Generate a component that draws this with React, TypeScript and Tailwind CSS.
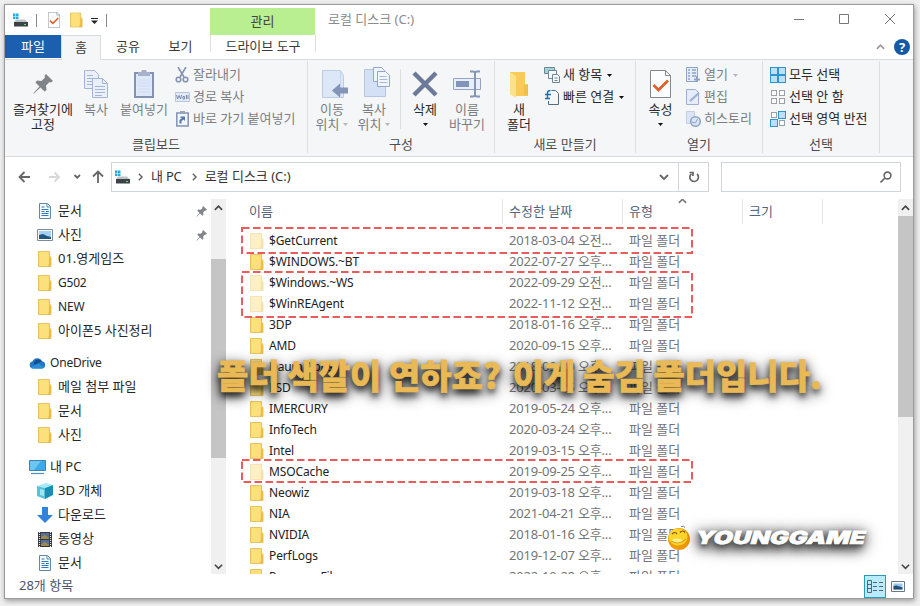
import type { ReactNode } from "react";
import clsx from "clsx";

type IconName = "doc" | "picture" | "folder" | "cloud" | "pc" | "cube" | "download" | "video";

interface NavItem {
  label: string;
  icon: IconName;
  root?: boolean;
  pinned?: boolean;
  latin?: boolean; // latin-only labels are set slightly smaller than hangul
}

interface FileRow {
  name: string;
  date: string;
  hidden?: boolean;
}

const NAV: NavItem[] = [
  { label: "문서", icon: "doc", pinned: true },
  { label: "사진", icon: "picture", pinned: true },
  { label: "01.영게임즈", icon: "folder" },
  { label: "G502", icon: "folder", latin: true },
  { label: "NEW", icon: "folder", latin: true },
  { label: "아이폰5 사진정리", icon: "folder" },
  { label: "OneDrive", icon: "cloud", root: true, latin: true },
  { label: "메일 첨부 파일", icon: "folder" },
  { label: "문서", icon: "folder" },
  { label: "사진", icon: "folder" },
  { label: "내 PC", icon: "pc", root: true },
  { label: "3D 개체", icon: "cube" },
  { label: "다운로드", icon: "download" },
  { label: "동영상", icon: "video" },
  { label: "문서", icon: "doc" },
];

const FILES: FileRow[] = [
  { name: "$GetCurrent", date: "2018-03-04 오전...", hidden: true },
  { name: "$WINDOWS.~BT", date: "2022-07-27 오후..." },
  { name: "$Windows.~WS", date: "2022-09-29 오전...", hidden: true },
  { name: "$WinREAgent", date: "2022-11-12 오전...", hidden: true },
  { name: "3DP", date: "2018-01-16 오후..." },
  { name: "AMD", date: "2020-09-15 오후..." },
  { name: "Daum Apps", date: "2018-09-20 오후..." },
  { name: "ESD", date: "2020-03-25 오후..." },
  { name: "IMERCURY", date: "2019-05-24 오후..." },
  { name: "InfoTech", date: "2020-03-24 오후..." },
  { name: "Intel", date: "2019-03-15 오후..." },
  { name: "MSOCache", date: "2019-09-25 오후...", hidden: true },
  { name: "Neowiz", date: "2019-03-18 오후..." },
  { name: "NIA", date: "2021-04-21 오후..." },
  { name: "NVIDIA", date: "2018-01-16 오후..." },
  { name: "PerfLogs", date: "2019-12-07 오후..." },
  { name: "Program Files", date: "2022-10-28 오후..." },
];

function FolderIcon({ faded, className = "w-[14px] h-4" }: { faded?: boolean; className?: string }) {
  return (
    <svg viewBox="0 0 14 16" className={clsx("shrink-0", className, faded && "opacity-45")}>
      <path d="M.5.5h11v4l1.500 2v9H.5z" fill="#fbdc72" stroke="#dfb648" strokeWidth=".8" />
      <path d="M2 1h8v14H2z" fill="#fde07c" />
      <path d="M11 5v7l-1 3.500h3V8z" fill="#e9bd48" />
    </svg>
  );
}

function PinIcon({ className }: { className?: string }) {
  return (
    <svg viewBox="0 0 20 20" className={className} fill="#80858b">
      <path d="M13 0l7 7-2 1.500-1.500-.5-3.500 3.500.5 4.500-2 1.500-4-4L1.500 19 0 20l1-1.500 5.500-6-4-4L4 6.500l4.500.5L12 3.500 11.500 2z" />
    </svg>
  );
}

function DriveIcon() {
  return (
    <svg viewBox="0 0 16 14" className="w-4 h-[14px] shrink-0">
      <path d="M1 .5h2.500V3H1zM4 .5h2.500V3H4zM1 3.500h2.500V6H1zM4 3.500h2.500V6H4z" fill="#2aa9d6" />
      <path d="M4 6.500h9l3 3H2z" fill="#bcc3c8" />
      <path d="M2 9h14v4.500H2z" fill="#3c4246" />
      <path d="M12 11h2v1h-2z" fill="#5ee26a" />
    </svg>
  );
}

function NavIcon({ name }: { name: IconName }) {
  switch (name) {
    case "folder":
      return <FolderIcon />;
    case "doc":
      return (
        <svg viewBox="0 0 16 16" className="w-4 h-4">
          <path d="M2.5.5h8l3 3v12h-11z" fill="#f5faff" stroke="#5b8ab0" />
          <path d="M4.5 4h3M4.5 6.5h7M4.5 8.5h3M9 8.5h3M4.5 10.5h7M4.5 12.5h7" stroke="#2f7cc0" />
          <path d="M10 .5v3.500h3.500" fill="none" stroke="#5b8ab0" />
        </svg>
      );
    case "picture":
      return (
        <svg viewBox="0 0 16 12" className="w-4 h-3">
          <path d="M.5.5h15v11H.5z" fill="#fff" stroke="#7d8b99" />
          <path d="M2 2h12v8H2z" fill="#a5d0f2" />
          <path d="M2 6l4-1 4 2 4 1v2H2z" fill="#24557f" />
        </svg>
      );
    case "cloud":
      return (
        <svg viewBox="0 0 17 12" className="w-[17px] h-3">
          <path d="M4 11.500a3.500 3.500 0 0 1-.6-6.900A5.200 5.200 0 0 1 13 4.200a3.700 3.700 0 0 1 .2 7.300z" fill="#1f78c8" />
          <path d="M4.500 5.500A5.200 5.200 0 0 1 13 4.200L6 8z" fill="#125091" />
          <path d="M2 10.600L9 6.500l6.300 4c-.6.700-1.300 1-2.100 1H4c-.8 0-1.500-.4-2-.9z" fill="#2b8fd8" />
        </svg>
      );
    case "pc":
      return (
        <svg viewBox="0 0 17 16" className="w-[17px] h-4">
          <path d="M.5 1.500h16v10H.5z" fill="#3fa9e8" stroke="#3d83af" />
          <path d="M1 2h11L5 11H1z" fill="#6cc6f4" />
          <path d="M2 14.500h13" stroke="#4c91bd" strokeWidth="1.200" />
        </svg>
      );
    case "cube":
      return (
        <svg viewBox="0 0 16 16" className="w-4 h-4">
          <path d="M0 3l9-3 7 2-8 3z" fill="#a9e9f5" />
          <path d="M0 3l8 2v11l-8-3z" fill="#53c2dc" />
          <path d="M8 5l8-3v10l-8 4z" fill="#1a8eb2" />
          <path d="M3 6l4 1v6l-4-1z" fill="#a5e2ef" />
        </svg>
      );
    case "download":
      return (
        <svg viewBox="0 0 16 16" className="w-4 h-4">
          <path d="M5 0h6v8h5l-8 8-8-8h5z" fill="#2f83dc" />
        </svg>
      );
    case "video":
      return (
        <svg viewBox="0 0 14 15" className="w-[14px] h-[15px]">
          <path d="M0 0h14v15H0z" fill="#33363b" />
          <path d="M3 1h8v6H3zM3 8h8v6H3z" fill="#566f96" />
          <path d="M3 5l4-2 4 3v1H3zM3 12l4-2 4 3v1H3z" fill="#9c8a4f" />
          <path d="M1.500 0v15M12.500 0v15" stroke="#e8e8e8" strokeWidth="1.200" strokeDasharray="1 1" />
        </svg>
      );
  }
}

function Caret({ faded }: { faded?: boolean }) {
  return (
    <svg viewBox="0 0 5 3" className={clsx("w-[5px] h-[3px] shrink-0", faded ? "fill-[#b5b8bb]" : "fill-[#111]")}>
      <path d="M0 0h5L2.500 3z" />
    </svg>
  );
}

function Chevron({ dir, className }: { dir: "up" | "down" | "right"; className?: string }) {
  const d = { up: "M1 6.500l4-4 4 4", down: "M1 3l4 4 4-4", right: "M3.500 1l4 4-4 4" }[dir];
  return (
    <svg viewBox="0 0 10 10" className={clsx("shrink-0", className)} fill="none" stroke="currentColor" strokeWidth="1.800">
      <path d={d} />
    </svg>
  );
}

function BigButton({ icon, lines, className, muted, caret }: { icon: ReactNode; lines: string[]; className: string; muted?: boolean; caret?: "line" | "inline" }) {
  return (
    <div className={clsx("flex flex-col items-center shrink-0 pt-2 leading-[15px] whitespace-nowrap", muted ? "text-[#7b7e82]" : "text-[#2b2b2b]", className)}>
      <div className="h-[30px] flex items-center justify-center">{icon}</div>
      <div className="mt-[3px] text-center">
        {lines.map((line, i) => (
          <div key={line} className="flex items-center justify-center gap-1">
            {line}
            {caret === "inline" && i === lines.length - 1 && <Caret faded />}
          </div>
        ))}
      </div>
      {caret === "line" && <div className="h-[15px] flex items-center"><Caret /></div>}
    </div>
  );
}

function SmallButton({ icon, label, muted, caret }: { icon: ReactNode; label: string; muted?: boolean; caret?: boolean }) {
  return (
    <div className={clsx("flex items-center h-[22px] whitespace-nowrap", muted ? "text-[#7b7e82]" : "text-[#2b2b2b]")}>
      <span className="w-4 mr-[3px] flex justify-center">{icon}</span>
      {label}
      {caret && <span className="ml-[5px]"><Caret faded={muted} /></span>}
    </div>
  );
}

function RibbonGroup({ label, className, children }: { label: string; className: string; children?: ReactNode }) {
  return (
    <div className={clsx("flex flex-col shrink-0 border-r border-[#dcdfe2] h-[92px]", className)}>
      <div className="flex h-[76px]">{children}</div>
      <div className="text-center leading-[18px] text-[#4c4c4c]">{label}</div>
    </div>
  );
}

function PagesIcon() {
  return (
    <svg viewBox="0 0 24 28" className="w-6 h-7" fill="#eaf0fa" stroke="#a5b5d6">
      <path d="M.5.5h10l4 4v14H.5z" />
      <path d="M3 5.500h6M3 8.500h9M3 11.500h9M3 14.500h9" />
      <path d="M8.500 8.500h10l5 5v14h-15z" />
      <path d="M18.500 8.500v5h5M11 16.500h10M11 19.500h10M11 22.500h10M11 25.500h7" fill="none" />
    </svg>
  );
}

function PasteIcon() {
  return (
    <svg viewBox="0 0 20 30" className="w-5 h-[30px]">
      <path d="M1 4h18v24H1z" fill="#dfe8f9" stroke="#8292b4" strokeWidth="2" />
      <path d="M4 3h3l1-2h4l1 2h3v4H4z" fill="#a7b2c8" />
      <path d="M4 11h12M4 14h12M4 17h12M4 20h12M4 23h12" stroke="#d0dcf3" />
    </svg>
  );
}

function MoveIcon() {
  return (
    <svg viewBox="0 0 26 28" className="w-[26px] h-7">
      <path d="M.5.5h18l3 5v22H.5z" fill="#dce7f8" stroke="#bccbe6" />
      <path d="M18.500 1v26" stroke="#c6d5ee" />
      <path d="M10 20.500l8-7v4h9v6h-9v4z" fill="#8294b7" />
    </svg>
  );
}

function CopyToIcon() {
  return (
    <svg viewBox="0 0 26 30" className="w-[26px] h-[30px]">
      <path d="M.5 2.500h18l3 5v22H.5z" fill="#d3e0f5" stroke="#b5c6e3" />
      <path d="M9.500.5h8l3 3v11h-11z" fill="#f1f5fc" stroke="#93a5ca" />
      <path d="M13.500 4.500h8l4 4v11h-12z" fill="#f1f5fc" stroke="#93a5ca" />
      <path d="M15.500 9.500h7M15.500 12.500h8M15.500 15.500h8" stroke="#a9b9d8" />
    </svg>
  );
}

function RenameIcon() {
  return (
    <svg viewBox="0 0 28 28" className="w-7 h-7">
      <path d="M.5 8.500h27v11H.5z" fill="#e8eefa" stroke="#93a5ca" />
      <path d="M3 11h13v6H3z" fill="#8294b7" />
      <path d="M17 1.500h3q2 0 2 2v21q0 2-2 2h-3M27 1.500h-3q-2 0-2 2M27 26.500h-3q-2 0-2-2" fill="none" stroke="#8495b6" strokeWidth="2" />
    </svg>
  );
}

function PropertiesIcon({ className = "w-[21px] h-7" }: { className?: string }) {
  return (
    <svg viewBox="0 0 21 28" className={className}>
      <path d="M.5.5h15l5 5v22H.5z" fill="#fcfdfe" stroke="#83888e" />
      <path d="M15.500.5v5h5" fill="none" stroke="#83888e" />
      <path d="M3.500 15l5 5L18 10.500" fill="none" stroke="#dc6328" strokeWidth="2.800" />
    </svg>
  );
}

function TilesIcon({ filled }: { filled: boolean[] }) {
  const spots = [[0.5, 0.5], [8.500, 0.5], [0.5, 8.500], [8.500, 8.500]];
  return (
    <svg viewBox="0 0 16 16" className="w-4 h-4 shrink-0">
      {spots.map(([x, y], i) =>
        filled[i] ? (
          <rect key={i} x={x} y={y} width="7" height="7" fill="#b9e2fa" stroke="#2f94cf" />
        ) : (
          <rect key={i} x={x + 1} y={y + 1} width="5" height="5" fill="#fff" stroke="#9aa0a6" />
        ),
      )}
    </svg>
  );
}

function Ribbon() {
  return (
    <div className="flex h-[98px] shrink-0 pt-px bg-[#f5f6f7] border-y border-[#dadbdc]">
      <RibbonGroup label="클립보드" className="w-[303px]">
        <BigButton className="w-[76px]" icon={<PinIcon className="w-5 h-5" />} lines={["즐겨찾기에", "고정"]} />
        <BigButton className="w-[30px]" muted icon={<PagesIcon />} lines={["복사"]} />
        <BigButton className="w-[66px]" muted icon={<PasteIcon />} lines={["붙여넣기"]} />
        <div className="pt-[3px] ml-[-3px]">
          <SmallButton
            muted
            label="잘라내기"
            icon={
              <svg viewBox="0 0 14 16" className="w-[14px] h-4" fill="none" stroke="#8494b2" strokeWidth="1.600">
                <path d="M3 0l6 10M11 0L5 10" />
                <circle cx="3.500" cy="12.500" r="2.300" />
                <circle cx="10.500" cy="12.500" r="2.300" />
              </svg>
            }
          />
          <SmallButton
            muted
            label="경로 복사"
            icon={
              <svg viewBox="0 0 15 10" className="w-[15px] h-[10px]">
                <path d="M.5.5h14v9H.5z" fill="#e3eaf7" stroke="#b9c5dc" />
                <path d="M1.500 3l1 4 1.500-3.500L5.500 7l1-4M8 7V4.500h1.500V7zM11.500 3v4M13 3v4" fill="none" stroke="#7284a8" strokeWidth=".9" />
              </svg>
            }
          />
          <SmallButton
            muted
            label="바로 가기 붙여넣기"
            icon={
              <svg viewBox="0 0 13 16" className="w-[13px] h-4">
                <path d="M.8 2h11.400v13H.8z" fill="#f1f5fc" stroke="#8292b4" strokeWidth="1.500" />
                <path d="M4 0h5v3H4z" fill="#97a4bd" />
                <path d="M3.500 12.500V9l2.500-2H4.500V5.500H9V10L7.500 8.500 5.500 10v2.500z" fill="#5b75a8" />
              </svg>
            }
          />
        </div>
      </RibbonGroup>
      <RibbonGroup label="구성" className="w-[187px]">
        <BigButton className="w-[48px]" muted icon={<span className="ml-[6px]"><MoveIcon /></span>} lines={["이동", "위치"]} caret="inline" />
        <BigButton className="w-[36px] mr-[8px]" muted icon={<span className="ml-[6px] mb-1"><CopyToIcon /></span>} lines={["복사", "위치"]} caret="inline" />
        <div className="w-px h-[60px] mt-2 bg-[#dcdfe2]" />
        <BigButton
          className="w-[48px]"
          icon={
            <svg viewBox="0 0 26 26" className="w-[26px] h-[26px]" stroke="#6b7a98" strokeWidth="4.500">
              <path d="M2 2l22 22M24 2L2 24" />
            </svg>
          }
          lines={["삭제"]}
          caret="line"
        />
        <BigButton className="w-[36px]" muted icon={<RenameIcon />} lines={["이름", "바꾸기"]} />
      </RibbonGroup>
      <RibbonGroup label="새로 만들기" className="w-[141px]">
        <BigButton
          className="w-[48px]"
          icon={
            <svg viewBox="0 0 20 28" className="w-5 h-7">
              <path d="M1 2h15v12l3 1v11H4z" fill="#f7cb55" />
              <path d="M1 2l6 4v22l-6-4z" fill="#fde08a" />
              <path d="M15 15l4-1v12l-4-1z" fill="#f0c04a" />
            </svg>
          }
          lines={["새", "폴더"]}
        />
        <div className="pt-[3px] pl-px">
          <SmallButton
            label="새 항목"
            caret
            icon={
              <svg viewBox="0 0 16 16" className="w-4 h-4" fill="#f6f9fc" stroke="#6d8595">
                <path d="M.5.500h10v6H.5z" fill="#9dd4da" />
                <path d="M4.500 3.500h8v8h-8z" />
                <path d="M8.500 7.500h5l2 2v6h-7zM10.500 11h3M10.500 13.500h3" />
              </svg>
            }
          />
          <SmallButton
            label="빠른 연결"
            caret
            icon={
              <svg viewBox="0 0 16 16" className="w-4 h-4" fill="none" stroke="#566c7d">
                <path d="M4.500 12v3.500h10v-11l-3-3h-4" />
                <path d="M1 5.500h6M1 9.500h5M3.500 10V4q0-2.500 3-2.500" stroke="#1f6cad" strokeWidth="1.400" />
              </svg>
            }
          />
        </div>
      </RibbonGroup>
      <RibbonGroup label="열기" className="w-[127px]">
        <BigButton className="w-[49px]" icon={<PropertiesIcon />} lines={["속성"]} caret="line" />
        <div className="pt-[3px]">
          <SmallButton
            muted
            caret
            label="열기"
            icon={
              <svg viewBox="0 0 14 16" className="w-[14px] h-4" fill="#e6edf9" stroke="#8fa3c8">
                <path d="M.5.5h11v14H.5z" />
                <path d="M2 3h2M2 6h2M2 9h2M2 12h2M6 3h4M6 6h4M6 9h4" strokeWidth="1.500" />
                <path d="M11 9v6M8 12.500h6" strokeWidth="2" />
              </svg>
            }
          />
          <SmallButton
            muted
            label="편집"
            icon={
              <svg viewBox="0 0 14 16" className="w-[14px] h-4" fill="#e6edf9" stroke="#9eafd0">
                <path d="M.5.5h9l3 3v12H.5z" />
                <path d="M4 12L13 4" stroke="#9db0d4" strokeWidth="2.200" />
              </svg>
            }
          />
          <SmallButton
            muted
            label="히스토리"
            icon={
              <svg viewBox="0 0 15 16" className="w-[15px] h-4" fill="#dbe4f4" stroke="#8fa3c8">
                <path d="M.5.500h8v12h-8z" stroke="#c3d0e8" />
                <circle cx="9.500" cy="10.500" r="4.800" strokeWidth="1.500" />
                <path d="M6 11l3.500 1 2-4" fill="none" />
              </svg>
            }
          />
        </div>
      </RibbonGroup>
      <RibbonGroup label="선택" className="w-[117px]">
        <div className="pt-[3px] pl-[7px]">
          <SmallButton label="모두 선택" icon={<TilesIcon filled={[true, true, true, true]} />} />
          <SmallButton label="선택 안 함" icon={<TilesIcon filled={[false, false, false, false]} />} />
          <SmallButton label="선택 영역 반전" icon={<TilesIcon filled={[false, true, true, false]} />} />
        </div>
      </RibbonGroup>
    </div>
  );
}

function TitleBar() {
  return (
    <div className="flex h-[30px] shrink-0">
      <div className="flex items-center w-[205px] pl-[7px] shrink-0">
        <DriveIcon />
        <span className="w-px h-[13px] bg-[#888] ml-2 mr-[11px]" />
        <PropertiesIcon className="w-3 h-4" />
        <span className="ml-[10px]"><FolderIcon className="w-[13px] h-4" /></span>
        <svg viewBox="0 0 7 6" className="w-[7px] h-[6px] ml-[8px] mt-0.5">
          <path d="M0 .5h7" stroke="#222" />
          <path d="M0 2.500h7L3.500 6z" fill="#222" />
        </svg>
        <span className="w-px h-[13px] bg-[#888] ml-2" />
      </div>
      <div className="w-[105px] mt-[3px] bg-[#b9ef91] flex items-center justify-center text-[#444]">관리</div>
      <div className="ml-[13px] flex-1 leading-[29px] text-[#8c8c8c]">로컬 디스크 (C:)</div>
      <svg viewBox="0 0 104 12" className="w-[104px] h-3 mt-[8px] mr-4" fill="none" stroke="#777">
        <path d="M1 6.500h10M46.500 1.500h9v9h-9zM92 1l10 10M102 1L92 11" />
      </svg>
    </div>
  );
}

function Tabs() {
  return (
    <div className="flex h-6 shrink-0 leading-[23px] text-center text-[#3a3a3a] whitespace-nowrap">
      <div className="w-[56px] bg-[#1b5fae] text-white h-[23px]">파일</div>
      <div className="w-[40px] bg-[#f5f6f7] border-x border-t border-[#dadbdc] -mb-px relative leading-[22px]">홈</div>
      <div className="w-[54px]">공유</div>
      <div className="w-[51px]">보기</div>
      <div className="w-[106px] ml-[4px] h-[17px] border-x border-[#dcdfe2] leading-[22px]">드라이브 도구</div>
      <div className="flex-1" />
      <div className="flex items-center gap-[9px] pr-[3px]">
        <Chevron dir="up" className="w-[9px] h-[9px] text-[#999]" />
        <span className="w-4 h-4 rounded-full bg-[#1459a6] text-white text-[13px] font-bold leading-4">?</span>
      </div>
    </div>
  );
}

function AddressBar() {
  return (
    <div className="flex items-center h-[42px] pb-[3px] shrink-0 text-[#666]">
      <svg viewBox="0 0 90 14" className="w-[90px] h-[14px] ml-[13px] mr-[3px]" fill="none" stroke="currentColor" strokeWidth="1.800">
        <path d="M6.500 2L1.500 7l5 5M1.500 7H12" />
        <path d="M36.500 2.500L41 7l-4.500 4.500M41 7H31" stroke="#d8d8d8" />
        <path d="M56.500 5L59.200 7.700 62 5" />
        <path d="M75 6.500l5-5 5 5M80 1.500V13" />
      </svg>
      <div className="flex items-center w-[598px] h-[30px] border border-[#cfd6da] pl-[2px]">
        <DriveIcon />
        <Chevron dir="right" className="w-2 h-2 ml-[6px] mr-[7px]" />
        <span className="text-[#333] tracking-[-0.2px]">내 PC</span>
        <Chevron dir="right" className="w-2 h-2 ml-[8px] mr-[7px]" />
        <span className="text-[#333] flex-1">로컬 디스크 (C:)</span>
        <Chevron dir="down" className="w-[10px] h-[10px] mr-[9px]" />
        <div className="w-[30px] h-full border-l border-[#cfd6da] flex items-center justify-center">
          <svg viewBox="0 0 12 12" className="w-3 h-3" fill="none" stroke="currentColor" strokeWidth="1.700">
            <path d="M9 3A4.300 4.300 0 1 1 3.500 2.800M1.500 1.500H5V5" />
          </svg>
        </div>
      </div>
      <div className="flex items-center justify-end w-[180px] h-[30px] border border-[#cfd6da] ml-3 pr-2">
        <svg viewBox="0 0 12 12" className="w-3 h-3" fill="none" stroke="currentColor" strokeWidth="1.600">
          <circle cx="7.500" cy="4.500" r="3.400" />
          <path d="M5 7L.5 11.500" />
        </svg>
      </div>
    </div>
  );
}

function Scrollbar({ offset, thumb }: { offset: string; thumb: string }) {
  return (
    <div className="w-[15px] shrink-0 h-full flex flex-col items-center bg-[#f0f0f0] text-[#444] pt-[5px]">
      <Chevron dir="up" className="w-[9px] h-[9px]" />
      <div className={clsx("w-full bg-[#c5c5c5]", offset, thumb)} />
      <Chevron dir="down" className="w-[9px] h-[9px] mt-auto mb-[3px]" />
    </div>
  );
}

function NavPane() {
  return (
    <div className="w-[206px] shrink-0 overflow-hidden text-[#262626]">
      {NAV.map((item, i) => (
        <div key={i} className={clsx("flex items-center h-6", item.root ? "pl-6 mt-2" : "pl-8")}>
          <span className={clsx("flex justify-center", item.root ? "w-[17px] mr-1" : "w-4 mr-[5px]")}>
            <NavIcon name={item.icon} />
          </span>
          <span className={clsx("flex-1 whitespace-nowrap", item.latin && "text-xs tracking-[-0.2px]")}>{item.label}</span>
          {item.pinned && <PinIcon className="w-[11px] h-[11px] mr-1" />}
        </div>
      ))}
    </div>
  );
}

function FileList() {
  return (
    <div className="flex-1 min-w-0 overflow-hidden pl-px">
      <div className="grid grid-cols-[276px_120px_120px_80px] h-[25px] leading-[24px] text-[#55647a]">
        <div className="pl-[22px] border-r border-[#e2e4e6]">이름</div>
        <div className="pl-[6px] border-r border-[#e2e4e6]">수정한 날짜</div>
        <div className="pl-[6px] border-r border-[#e2e4e6] relative">
          유형
          <Chevron dir="up" className="absolute left-[55px] -top-[2px] w-[9px] h-[9px] text-[#777]" />
        </div>
        <div className="pl-[6px] border-r border-[#e2e4e6]">크기</div>
      </div>
      <div className="pt-[6px]">
        {FILES.map((file) => (
          <div key={file.name} className="grid grid-cols-[282px_120px_120px] h-[21px] items-center text-[#757575] whitespace-nowrap">
            <div className="flex items-center pl-[23px] gap-[5px] text-[#222] text-xs tracking-[-0.12px]">
              <FolderIcon faded={file.hidden} />
              {file.name}
            </div>
            <div className="tracking-[-0.2px]">{file.date}</div>
            <div>파일 폴더</div>
          </div>
        ))}
      </div>
    </div>
  );
}

function Watermark() {
  return (
    <div className="absolute left-[667px] top-[525px] flex items-center">
      <svg viewBox="0 0 24 26" className="w-6 h-[26px]">
        <circle cx="12" cy="14" r="11" fill="#f49a08" />
        <ellipse cx="11" cy="12" rx="9.500" ry="8.500" fill="#ffd52c" />
        <ellipse cx="10" cy="16" rx="5" ry="2.500" fill="#fff08a" />
        <path d="M5 9q3-3 5 0M13 7.500q3-3 5 0" fill="none" stroke="#7a4606" strokeWidth="1.200" />
        <path d="M4 16q8 5 15-2" fill="none" stroke="#dc9418" />
        <path d="M14 1.500q3-1 4 1" fill="none" stroke="#777" />
      </svg>
      <span className="ml-[5px] origin-left scale-x-[1.380] -skew-x-12 font-['Inter'] font-black text-[18px] leading-[26px] text-white [-webkit-text-stroke:0.6px_white] [text-shadow:0_2px_3px_#555,0_4px_9px_#000,0_3px_14px_#000]">
        YOUNGGAME
      </span>
    </div>
  );
}

export default function App() {
  return (
    <div className="relative w-[920px] h-[606px] overflow-hidden bg-[#efefef] pl-1 pt-1 font-['Noto_Sans','Noto_Sans_CJK_KR',sans-serif] text-[13px]">
      <div className="flex flex-col w-[910px] h-[595px] bg-white border border-[#9a9a9a] shadow-[1px_2px_5px_rgba(0,0,0,0.35)]">
        <TitleBar />
        <Tabs />
        <Ribbon />
        <AddressBar />
        <div className="flex h-[375px] shrink-0">
          <NavPane />
          <Scrollbar offset="mt-[46px]" thumb="h-[199px]" />
          <FileList />
          <Scrollbar offset="mt-[3px]" thumb="h-[201px]" />
        </div>
        <div className="flex flex-1 items-center justify-between text-[#4b5673]">
          <span className="pl-[14px]">28개 항목</span>
          <div className="flex items-center gap-[5px] pr-[8px]">
            <span className="w-[22px] h-[23px] bg-[#b8ecfa] border border-[#2c98ba] flex items-center justify-center">
              <svg viewBox="0 0 16 13" className="w-4 h-[13px]" fill="none" stroke="#5a6470">
                <path d="M.5.500h4v12h-4zM.5 4.500h4M.5 8.500h4M6 2.500h4M6 6.500h4M6 10.500h4M12 2.500h4M12 6.500h4M12 10.500h4" />
              </svg>
            </span>
            <svg viewBox="0 0 14 11" className="w-[14px] h-[11px]">
              <path d="M.5.500h13v10H.5z" fill="#fff" stroke="#66788a" />
              <path d="M2.500 2.500h9v6h-9z" fill="#9ac5ec" />
              <path d="M2.500 5l3-.5 6 2v2h-9z" fill="#264f7a" />
            </svg>
          </div>
        </div>
      </div>

      {/* red frames around the hidden folders */}
      <svg viewBox="0 0 920 606" className="absolute inset-0 w-[920px] h-[606px]" fill="none" stroke="#ea5c5c" strokeWidth="2" strokeDasharray="7.500 3.500">
        <rect x="242" y="228" width="450" height="25" />
        <rect x="242" y="272" width="450" height="45" />
        <rect x="242" y="460" width="450" height="22" />
      </svg>

      <div className="absolute left-[217px] top-[351px] whitespace-nowrap font-['Noto_Sans_CJK_KR',sans-serif] font-black text-[34px] leading-[48px] text-[#e8b955] [-webkit-text-stroke:0.7px_#e8b955] [text-shadow:0_4px_6px_rgba(0,0,0,0.75),0_4px_14px_rgba(0,0,0,1)]">
        폴더 색깔이 연하죠?<span className="ml-1">{" 이게 숨김 폴더입니다."}</span>
      </div>
      <Watermark />
    </div>
  );
}
